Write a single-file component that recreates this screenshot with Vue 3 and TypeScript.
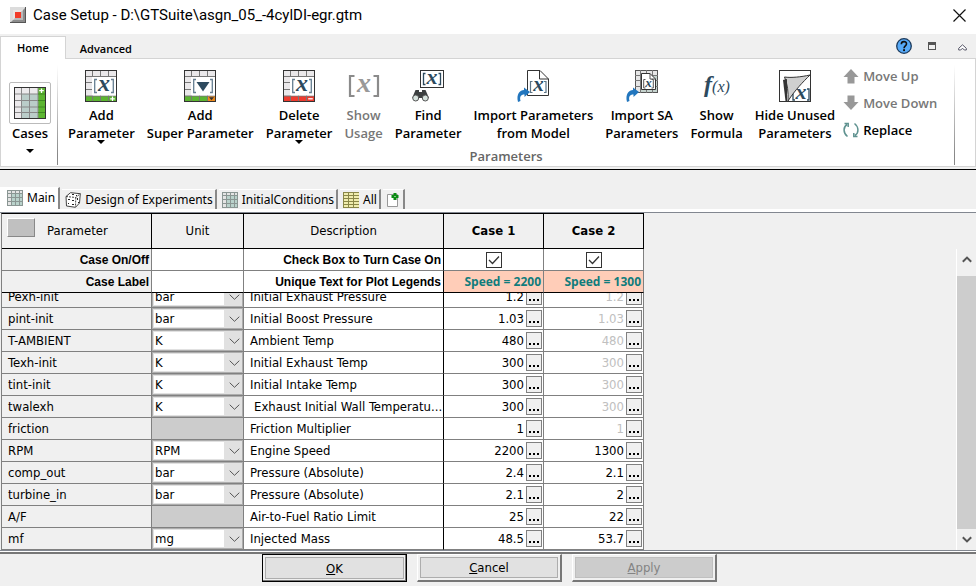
<script setup lang="ts">
import { ref } from 'vue'

type RibbonIcon =
  | 'add' | 'super' | 'delete' | 'usage' | 'find' | 'import' | 'sa' | 'formula' | 'hide'

interface RibbonItem {
  icon: RibbonIcon
  lines: [string, string]
  menu?: boolean
  disabled?: boolean
}

interface ParameterRow {
  name: string
  unit: string
  description: string
  values: [string, string]
  inherited?: boolean
  indent?: boolean
}

const ribbonItems: RibbonItem[] = [
  { icon: 'add', lines: ['Add', 'Parameter'], menu: true },
  { icon: 'super', lines: ['Add', 'Super Parameter'] },
  { icon: 'delete', lines: ['Delete', 'Parameter'], menu: true },
  { icon: 'usage', lines: ['Show', 'Usage'], disabled: true },
  { icon: 'find', lines: ['Find', 'Parameter'] },
  { icon: 'import', lines: ['Import Parameters', 'from Model'] },
  { icon: 'sa', lines: ['Import SA', 'Parameters'] },
  { icon: 'formula', lines: ['Show', 'Formula'] },
  { icon: 'hide', lines: ['Hide Unused', 'Parameters'] },
]

const folders = ['Main', 'Design of Experiments', 'InitialConditions', 'All']
const activeFolder = ref('Main')

const cases = ref([
  { title: 'Case 1', label: 'Speed = 2200', on: true },
  { title: 'Case 2', label: 'Speed = 1300', on: true },
])

const rows = ref<ParameterRow[]>([
  { name: 'Pexh-init', unit: 'bar', description: 'Initial Exhaust Pressure', values: ['1.2', '1.2'], inherited: true },
  { name: 'pint-init', unit: 'bar', description: 'Initial Boost Pressure', values: ['1.03', '1.03'], inherited: true },
  { name: 'T-AMBIENT', unit: 'K', description: 'Ambient Temp', values: ['480', '480'], inherited: true },
  { name: 'Texh-init', unit: 'K', description: 'Initial Exhaust Temp', values: ['300', '300'], inherited: true },
  { name: 'tint-init', unit: 'K', description: 'Initial Intake Temp', values: ['300', '300'], inherited: true },
  { name: 'twalexh', unit: 'K', description: 'Exhaust Initial Wall Temperatu...', values: ['300', '300'], inherited: true, indent: true },
  { name: 'friction', unit: '', description: 'Friction Multiplier', values: ['1', '1'], inherited: true },
  { name: 'RPM', unit: 'RPM', description: 'Engine Speed', values: ['2200', '1300'] },
  { name: 'comp_out', unit: 'bar', description: 'Pressure (Absolute)', values: ['2.4', '2.1'] },
  { name: 'turbine_in', unit: 'bar', description: 'Pressure (Absolute)', values: ['2.1', '2'] },
  { name: 'A/F', unit: '', description: 'Air-to-Fuel Ratio Limit', values: ['25', '22'] },
  { name: 'mf', unit: 'mg', description: 'Injected Mass', values: ['48.5', '53.7'] },
])
</script>

<template>
  <div class="window">
    <header class="titlebar">
      <svg class="app-icon" width="16" height="16" viewBox="0 0 16 16" aria-hidden="true">
        <rect width="16" height="16" fill="#8c8c8c" />
        <path d="M0 0H16L0 16Z" fill="#dcdcdc" />
        <path d="M0 15H15V0H16V16H0Z" fill="#555" />
        <rect x="3" y="3" width="10" height="10" fill="#b9b9b9" />
        <path d="M3 13V3H13Z" fill="#e9e4e3" />
        <rect x="5" y="5" width="6" height="6" fill="#f23b28" />
      </svg>
      <h1 class="title">Case Setup - D:\GTSuite\asgn_05_-4cylDI-egr.gtm</h1>
      <button class="icon-button" type="button" aria-label="Close">
        <svg width="13" height="13" viewBox="0 0 13 13"><path d="M.5 .5L12.5 12.5M12.5 .5L.5 12.5" stroke="#111" stroke-width="1.2" /></svg>
      </button>
    </header>

    <nav class="ribbon-tabs">
      <button class="ribbon-tab active" type="button">Home</button>
      <button class="ribbon-tab" type="button">Advanced</button>
      <div class="ribbon-tools">
        <button class="icon-button" type="button" aria-label="Help">
          <svg width="16" height="16" viewBox="0 0 16 16">
            <circle cx="8" cy="8" r="7.3" fill="#56a9f7" stroke="#1c3a5c" stroke-width="1.3" />
            <path d="M5.3 6.2C5.3 2.7 10.7 2.8 10.5 6C10.4 7.8 8 8 8 10.2" fill="none" stroke="#111" stroke-width="1.6" />
            <rect x="7.1" y="11.2" width="1.9" height="1.9" fill="#111" />
          </svg>
        </button>
        <button class="icon-button" type="button" aria-label="Restore">
          <svg width="8" height="8" viewBox="0 0 8 8"><path d="M0 0H8V8H0ZM1 3V7H7V3Z" fill="#555" fill-rule="evenodd" /></svg>
        </button>
        <button class="icon-button low" type="button" aria-label="Collapse">
          <svg width="9" height="8" viewBox="0 0 9 8"><path d="M.7 4.3L4.5 .8L8.3 4.3V6H6.3L4.5 4.2L2.7 6H.7Z" fill="#fff" stroke="#556" stroke-width="1" /></svg>
        </button>
      </div>
    </nav>

    <section class="ribbon">
      <button class="cases-button" type="button">
        <span class="cases-frame">
          <svg width="32" height="32" viewBox="0 0 32 32">
            <rect width="32" height="32" fill="#eceaec" />
            <rect x="7" y="7" width="17" height="25" fill="#bacdc9" />
            <rect x="24" width="8" height="32" fill="#5cb531" />
            <path d="M7.5 0V32M15.5 0V32M24 0V32M0 7H24M0 13.5H24M0 20H24M0 25.5H24" stroke="#888" />
            <path d="M24 7H32M24 13.5H32M24 20H32M24 25.5H32" stroke="#3f8a22" />
            <rect x=".5" y=".5" width="31" height="31" fill="none" stroke="#333" />
            <path d="M27.5 1.5V6M25.2 3.7H29.8" stroke="#fff" stroke-width="1.3" />
          </svg>
        </span>
        <span>Cases</span>
        <span class="caret"></span>
      </button>
      <div class="divider"></div>

      <div class="group">
        <div class="group-items">
          <button
            v-for="item in ribbonItems"
            :key="item.icon"
            class="ribbon-button"
            type="button"
            :disabled="item.disabled"
          >
            <svg class="ribbon-icon" width="32" height="32" viewBox="0 0 32 32" aria-hidden="true">
              <template v-if="item.icon === 'add' || item.icon === 'super' || item.icon === 'delete'">
                <rect width="32" height="32" fill="#eae8ea" />
                <rect y="26" width="32" height="6" :fill="item.icon === 'delete' ? '#ee3c30' : '#5cb531'" />
                <rect v-if="item.icon === 'super'" x="24" y="26" width="8" height="6" fill="#ee8a1c" />
                <path d="M7.5 0V32M15.5 0V32M23.5 0V32M0 6.5H32M0 12.5H7M0 19.5H7M0 26H32" stroke="#777" />
                <rect x="7" y="7" width="24" height="18.5" fill="#fff" />
                <rect x=".5" y=".5" width="31" height="31" fill="none" stroke="#333" />
                <path d="M12 9.5H9.7V22.5H12M26 9.5H28.3V22.5H26" fill="none" stroke="#657e91" stroke-width="1.3" />
                <path v-if="item.icon === 'super'" d="M12.5 12H25.5L19 21.5Z" fill="#2d4a5e" />
                <text v-else class="math" x="19" y="21" font-size="24">x</text>
                <path v-if="item.icon === 'add'" d="M27.5 26.5V31M25.2 28.8H29.8" stroke="#fff" stroke-width="1.2" />
                <path v-if="item.icon === 'delete'" d="M25.2 28.8H29.8" stroke="#fff" stroke-width="1.3" />
                <path v-if="item.icon === 'super'" d="M25 27.3H30L27.5 30.3Z" fill="#333" />
              </template>
              <template v-else-if="item.icon === 'usage'">
                <path d="M6.5 6H2V26H6.5M25.5 6H30V26H25.5" fill="none" stroke="#8b8b8b" stroke-width="2.2" />
                <text class="math muted" x="16" y="22" font-size="28">x</text>
              </template>
              <template v-else-if="item.icon === 'find'">
                <rect x="8.5" y=".5" width="23" height="17" fill="#fff" stroke="#333" />
                <path d="M13.5 3.5H11.5V14.5H13.5M26.5 3.5H28.5V14.5H26.5" fill="none" stroke="#2d4a5e" stroke-width="1.3" />
                <text class="math" x="20" y="14" font-size="22">x</text>
                <path d="M3.5 20H7V22H10V20H13.5L17 28H.2Z" fill="#3c3f40" />
                <circle cx="3.7" cy="28" r="3" fill="#d6e2dd" stroke="#555" />
                <circle cx="13.3" cy="28" r="3" fill="#d6e2dd" stroke="#555" />
              </template>
              <template v-else-if="item.icon === 'import'">
                <path d="M10.5 .5H23L31.5 9V25.5H10.5Z" fill="#fff" stroke="#333" />
                <path d="M22.5 .5V9H31.5" fill="none" stroke="#333" />
                <path d="M15.5 11.5H13.5V22.5H15.5M27 11.5H29V22.5H27" fill="none" stroke="#5c7486" stroke-width="1.2" />
                <text class="math" x="21.5" y="21" font-size="21">x</text>
                <path d="M1 32C-1 24 3 20 7 20V17.5L13 22L7.5 27V24.5C3.5 24.5 2.5 27 3.5 31Z" fill="#2276be" />
              </template>
              <template v-else-if="item.icon === 'sa'">
                <rect x="9.5" y=".5" width="22" height="22" fill="#c5d3ce" stroke="#555" />
                <path d="M10 1H31V5H15V22H10Z" fill="#e6e6e6" />
                <path d="M14.5 0V23M20.5 0V23M26.5 0V23M9 5.5H32M9 10.5H32M9 16.5H32" stroke="#777" />
                <path d="M15.5 3.5H24L29.5 9V19.5H15.5Z" fill="#fff" stroke="#333" />
                <path d="M24 3.5V9H29.5M19.500 9.500H17.700V18H19.500M25.500 9.500H27.300V18H25.500" fill="none" stroke="#555" />
                <text class="math" x="22.5" y="17" font-size="13">x</text>
                <path d="M1 32C-1 24 3 20 7 20V17.5L13 22L7.5 27V24.5C3.5 24.5 2.5 27 3.5 31Z" fill="#2276be" />
              </template>
              <template v-else-if="item.icon === 'formula'">
                <text class="math" x="7" y="22" font-size="24">f</text>
                <text class="math thin" x="20" y="22" font-size="16">(x)</text>
              </template>
              <template v-else>
                <rect x=".5" y=".5" width="31" height="31" fill="#fff" stroke="#333" />
                <path d="M16 20H14V30H16M28 19H30V30H28" fill="none" stroke="#2d4a5e" stroke-width="1.3" />
                <text class="math" x="22" y="29" font-size="22">x</text>
                <path d="M5.5 7C12 8 22 7 31 5C24 12 16 20 9 31C9.500 22 8.500 14 5.500 7Z" fill="#cfcfcf" stroke="#333" />
                <path d="M4 10L8 9V31H6.500Z" fill="#333" />
              </template>
            </svg>
            <span>{{ item.lines[0] }}</span>
            <span>{{ item.lines[1] }}</span>
            <span v-if="item.menu" class="caret"></span>
          </button>

          <div class="stack">
            <button class="stack-button" type="button" disabled>
              <svg width="16" height="16" viewBox="0 0 16 16"><path d="M8 1L15.500 9H11.500V15.500H4.500V9H.5Z" fill="#989898" /></svg>
              Move Up
            </button>
            <button class="stack-button" type="button" disabled>
              <svg width="16" height="16" viewBox="0 0 16 16"><path d="M8 15L15.500 7H11.500V.5H4.500V7H.5Z" fill="#989898" /></svg>
              Move Down
            </button>
            <button class="stack-button" type="button">
              <svg width="16" height="16" viewBox="0 0 16 16" fill="none" stroke="#5f9290" stroke-width="1.500">
                <path d="M4.500 14.500C0 11 0 5 4 2.500M1.500 1.500H5.200V5" />
                <path d="M11.500 1.500C16 5 16 11 12 13.500M14.500 14.500H10.800V11" />
              </svg>
              Replace
            </button>
          </div>
        </div>
        <div class="group-label">Parameters</div>
      </div>
      <div class="divider"></div>
    </section>

    <nav class="folders">
      <button
        v-for="folder in folders"
        :key="folder"
        class="folder"
        :class="{ active: folder === activeFolder }"
        type="button"
        @click="activeFolder = folder"
      >
        <svg v-if="folder === 'Design of Experiments'" width="16" height="16" viewBox="0 0 16 16" aria-hidden="true">
          <path d="M1 4.500L5.500 .7L15.300 1.700L14.500 11L10.500 15.300L1.500 14Z" fill="#fff" stroke="#444" />
          <path d="M1 4.500L10.800 5.500L15.300 1.700M10.800 5.500L10.500 15" fill="none" stroke="#444" stroke-dasharray="2 1" />
          <path d="M3 7H5V8H3ZM7 8H9V9H7ZM3 11H4V12H3ZM7 12H9V13H7ZM12 6H13V8H12ZM13 10H14V11H13ZM7 2H9V3H7ZM11 3H12V4H11Z" fill="#222" />
        </svg>
        <svg v-else-if="folder === 'All'" width="16" height="16" viewBox="0 0 16 16" aria-hidden="true">
          <rect width="16" height="16" fill="#f0edae" />
          <path d="M0 .5H16M0 3.500H16M0 6.500H16M0 9.500H16M0 12.500H16M0 15.500H16M.5 0V16M5.500 0V16M10.500 0V16" stroke="#8a8748" />
        </svg>
        <svg v-else width="16" height="16" viewBox="0 0 16 16" aria-hidden="true">
          <rect width="16" height="16" fill="#e4e4e4" />
          <rect x="4" y="4" width="12" height="12" fill="#b9d2cb" />
          <path d="M0 .5H16M0 3.500H16M0 7.500H16M0 11.500H16M0 15.500H16M.5 0V16M4.500 0V16M8.500 0V16M12.500 0V16M15.500 0V16" stroke="#8a9693" />
        </svg>
        {{ folder }}
      </button>
      <button class="folder add-folder" type="button" aria-label="New folder">
        <svg width="12" height="16" viewBox="0 0 12 16">
          <path d="M.5 2.500H10.500V14.500H.5Z" fill="#fff" stroke="#999" />
          <path d="M8 1V8M4.500 4.500H11.500" stroke="#0a8a12" stroke-width="3" />
          <rect x="7.500" y="4" width="1" height="1" fill="#fff" />
        </svg>
      </button>
    </nav>

    <main class="grid">
      <div class="grid-tables">
        <table class="sheet head">
          <colgroup><col class="c-name" /><col class="c-unit" /><col class="c-desc" /><col class="c-case" /><col class="c-case" /></colgroup>
          <thead>
            <tr class="titles">
              <th>
                <div class="name-title">
                  <button class="corner" type="button" aria-label="Select all"></button>
                  <span>Parameter</span>
                </div>
              </th>
              <th>Unit</th>
              <th class="edge">Description</th>
              <th v-for="item in cases" :key="item.title" class="case-title">{{ item.title }}</th>
            </tr>
            <tr>
              <td class="name caption">Case On/Off</td>
              <td></td>
              <td class="caption edge">Check Box to Turn Case On</td>
              <td v-for="item in cases" :key="item.title" class="value">
                <label class="check">
                  <input v-model="item.on" type="checkbox" :aria-label="item.title" />
                  <svg v-if="item.on" width="16" height="16" viewBox="0 0 16 16"><path d="M3 8L6.500 11.500L13 4.500" fill="none" stroke="#333" stroke-width="1.300" /></svg>
                </label>
              </td>
            </tr>
            <tr class="labels">
              <td class="name caption">Case Label</td>
              <td></td>
              <td class="caption edge">Unique Text for Plot Legends</td>
              <td v-for="item in cases" :key="item.title" class="case-label">{{ item.label }}</td>
            </tr>
          </thead>
        </table>

        <div class="viewport">
          <table class="sheet">
            <colgroup><col class="c-name" /><col class="c-unit" /><col class="c-desc" /><col class="c-case" /><col class="c-case" /></colgroup>
            <tbody>
              <tr v-for="row in rows" :key="row.name">
                <td class="name">{{ row.name }}</td>
                <td v-if="row.unit" class="unit">
                  <div class="select">
                    <select v-model="row.unit" :aria-label="row.name + ' unit'">
                      <option>{{ row.unit }}</option>
                    </select>
                    <svg width="11" height="6" viewBox="0 0 11 6" aria-hidden="true"><path d="M.7 .7L5.500 5.300L10.300 .7" fill="none" stroke="#555" /></svg>
                  </div>
                </td>
                <td v-else class="no-unit"></td>
                <td class="edge" :class="{ indent: row.indent }">{{ row.description }}</td>
                <td v-for="(value, i) in row.values" :key="i" class="value">
                  <div class="value-box" :class="{ inherited: row.inherited && i > 0 }">
                    <span>{{ value }}</span>
                    <button class="more" type="button" :aria-label="'Edit ' + row.name">
                      <svg width="12" height="2" viewBox="0 0 12 2"><path d="M1 0H3V2H1ZM5 0H7V2H5ZM9 0H11V2H9Z" fill="#000" /></svg>
                    </button>
                  </div>
                </td>
              </tr>
            </tbody>
          </table>
        </div>
      </div>

      <div class="scrollbar" aria-hidden="true">
        <svg width="10" height="7" viewBox="0 0 10 7"><path d="M.8 5.800L5 1.600L9.200 5.800" fill="none" stroke="#555" stroke-width="2" /></svg>
        <div class="thumb"></div>
        <svg width="10" height="7" viewBox="0 0 10 7"><path d="M.8 1.200L5 5.400L9.200 1.200" fill="none" stroke="#555" stroke-width="2" /></svg>
      </div>
    </main>

    <footer class="actions">
      <button class="action default" type="button"><span><u>O</u>K</span></button>
      <button class="action" type="button"><span><u>C</u>ancel</span></button>
      <button class="action" type="button" disabled><span><u>A</u>pply</span></button>
    </footer>
  </div>
</template>

<style>
body {
  margin: 0;
}
</style>

<style scoped>
* {
  box-sizing: border-box;
}
button {
  margin: 0;
  padding: 0;
  border: 0;
  background: none;
  color: inherit;
  font: inherit;
}
svg {
  display: block;
  flex: none;
  overflow: visible;
}
.window {
  display: flex;
  flex-direction: column;
  height: 100vh;
  overflow: hidden;
  background: #f0f0f0;
  color: #000;
  font-family: "DejaVu Sans Condensed", "DejaVu Sans", sans-serif;
  font-size: 13px;
}
.titlebar {
  display: flex;
  flex: none;
  align-items: center;
  gap: 7px;
  height: 34px;
  padding: 0 10px 4px;
  background: #fff;
}
.title {
  flex: 1;
  margin: 0;
  font: 400 15px Roboto, sans-serif;
}
.ribbon-tabs {
  display: flex;
  flex: none;
  height: 25px;
  padding-top: 2px;
  border-bottom: 1px solid #d4d4d4;
  font: 600 11px "Open Sans", sans-serif;
}
.ribbon-tab {
  padding: 2px 14px 0;
}
.ribbon-tab.active {
  height: 23px;
  padding: 0 16px 2px;
  border: 1px solid #d4d4d4;
  border-bottom: 0;
  background: #fff;
  box-shadow: 0 1px #fff;
}
.ribbon-tools {
  display: flex;
  align-items: center;
  gap: 16px;
  margin-left: auto;
  padding: 0 9px 3px 0;
}
.low {
  padding: 4px 0 0 6px;
}
.ribbon {
  display: flex;
  flex: none;
  height: 108px;
  border: 1px solid #d4d4d4;
  border-top: 0;
  background: #fff;
  font: 600 13px/18px "Open Sans", sans-serif;
}
.cases-button {
  display: flex;
  flex-direction: column;
  align-items: center;
  width: 56px;
  padding: 23px 0 0 2px;
}
.cases-frame {
  padding: 4px;
  border: 1px solid #bbb;
  border-radius: 2px;
}
.caret {
  border: 4px solid transparent;
  border-top-color: #000;
  border-bottom: 0;
}
.cases-button .caret {
  margin-top: 7px;
}
.divider {
  width: 1px;
  margin: 6px 0 1px;
  background: linear-gradient(#fff, #888 90%);
}
.group {
  flex: none;
}
.group-items {
  display: flex;
  gap: 12px;
  height: 88px;
  padding: 11px 17px 0 10px;
}
.ribbon-button {
  display: flex;
  flex-direction: column;
  align-items: center;
  justify-content: flex-start;
  white-space: nowrap;
}
.ribbon-icon {
  margin-bottom: 4px;
}
.ribbon-button .caret {
  margin-top: -2px;
}
button:disabled {
  color: #777;
}
.math {
  fill: #2d4a5e;
  font-family: "Liberation Serif", serif;
  font-style: italic;
  font-weight: 700;
  text-anchor: middle;
}
.math.muted {
  fill: #999;
}
.math.thin {
  font-weight: 400;
}
.stack {
  display: flex;
  flex-direction: column;
  gap: 9px;
  margin: -3px 0 0 -4px;
}
.stack-button {
  display: flex;
  align-items: center;
  gap: 4px;
  white-space: nowrap;
}
.group-label {
  color: #666;
  text-align: center;
}
.folders {
  display: flex;
  flex: none;
  align-items: flex-end;
  gap: 2px;
  height: 43px;
  margin-top: 2px;
  padding-bottom: 3px;
  border-top: 1px solid #000;
  background: linear-gradient(#fff, #fff) bottom / 100% 3px no-repeat;
  font: 12px "Noto Sans", sans-serif;
}
.folder {
  display: flex;
  align-items: center;
  gap: 4px;
  height: 20px;
  padding: 0 2px 0 3px;
  border-top: 1px solid #fff;
  border-right: 2px solid #888;
  white-space: nowrap;
}
.folder.active {
  height: 22px;
  padding: 0 3px 2px 7px;
  background: #fff;
}
.folder.add-folder {
  padding: 0 4px;
}
.grid {
  display: flex;
  flex: 1;
  min-height: 0;
  border-top: 1px solid #828790;
  border-bottom: 1px solid #828790;
}
.grid-tables {
  display: flex;
  flex: 1;
  flex-direction: column;
  min-width: 0;
  padding-left: 1px;
}
.viewport {
  display: flex;
  flex: 1;
  flex-direction: column;
  justify-content: flex-end;
  min-height: 0;
  overflow: hidden;
}
.sheet {
  flex: none;
  width: 643px;
  border-collapse: separate;
  border-spacing: 0;
  border-left: 1px solid #808080;
  table-layout: fixed;
}
.head {
  border-top: 1px solid #000;
}
.c-name {
  width: 150px;
}
.c-unit {
  width: 92px;
}
.c-desc {
  width: 200px;
}
.c-case {
  width: 100px;
}
.sheet td,
.sheet th {
  height: 22px;
  padding: 0 2px 0 6px;
  border-right: 1px solid #808080;
  border-bottom: 1px solid #808080;
  background: #fff;
  line-height: 16px;
  white-space: nowrap;
  overflow: hidden;
}
.sheet .edge {
  border-right-color: #000;
}
.sheet .name {
  background: #f0f0f0;
}
.sheet .titles th {
  height: 35px;
  padding: 0;
  border-color: #000;
  background: #f0f0f0;
  font-weight: 400;
}
.sheet .titles .case-title {
  font-weight: 700;
}
.name-title {
  display: flex;
  align-items: center;
  gap: 12px;
  padding-left: 5px;
}
.corner {
  width: 28px;
  height: 19px;
  margin-bottom: 8px;
  border: 1px solid #fff;
  border-right-color: #888;
  border-bottom-color: #888;
  background: #c0c0c0;
}
.sheet .caption {
  font: 700 12px "Liberation Sans", sans-serif;
  text-align: right;
}
.sheet .labels td {
  border-bottom-color: #000;
}
.sheet .case-label {
  background: #ffcdb8;
  color: #107c7c;
  font: 700 12px "Open Sans", sans-serif;
  text-align: right;
}
.check {
  display: grid;
  width: 16px;
  margin: 0 auto;
}
.check input,
.check svg {
  grid-area: 1 / 1;
}
.check input {
  width: 16px;
  height: 16px;
  margin: 0;
  border: 1px solid #333;
  background: #fff;
  appearance: none;
}
.check svg {
  pointer-events: none;
}
.sheet .unit {
  padding: 0;
}
.select {
  display: grid;
  align-items: center;
}
.select select,
.select svg {
  grid-area: 1 / 1;
}
.select select {
  width: 100%;
  height: 21px;
  padding: 0 0 0 2px;
  border: 1px solid #adadad;
  border-radius: 0;
  outline: 1px solid #e1e1e1;
  outline-offset: -2px;
  background: linear-gradient(90deg, #fff calc(100% - 18px), #e1e1e1 0);
  color: #000;
  font: inherit;
  appearance: none;
}
.select svg {
  justify-self: end;
  margin-right: 3px;
  pointer-events: none;
}
.sheet .no-unit {
  background: #ccc;
}
.sheet .indent {
  padding-left: 10px;
}
.sheet .value {
  padding: 0 1px;
}
.value-box {
  display: flex;
  align-items: center;
  justify-content: flex-end;
  gap: 2px;
}
.inherited {
  color: #c0c0c0;
}
.more {
  display: flex;
  align-items: flex-end;
  justify-content: center;
  width: 16px;
  height: 17px;
  padding-bottom: 3px;
  border: 1px solid #808080;
  background: #f0f0f0;
}
.scrollbar {
  display: flex;
  flex-direction: column;
  align-items: center;
  width: 20px;
  margin-top: 36px;
  padding: 7px 0;
  gap: 13px;
  border-left: 1px solid #fff;
}
.scrollbar svg:last-child {
  margin-top: -6px;
}
.thumb {
  flex: 1;
  width: 100%;
  background: #cdcdcd;
}
.actions {
  display: flex;
  flex: none;
  justify-content: center;
  gap: 10px;
  height: 35px;
  padding: 0 0 4px 3px;
  border-top: 1px solid #fff;
  box-shadow: inset 0 2px #777;
}
.action {
  width: 145px;
  margin-top: 2px;
  padding: 2px;
  border: 1px solid #fff;
  border-right: 2px solid #777;
  border-bottom: 2px solid #777;
  background: #f0f0f0;
}
.action.default {
  border: 1px solid #000;
  box-shadow: inset -1px -1px #777;
}
.action span {
  display: flex;
  align-items: center;
  justify-content: center;
  height: 100%;
  border: 1px solid #adadad;
  background: #e1e1e1;
}
.action:disabled {
  color: #838383;
}
.action:disabled span {
  border-color: #bfbfbf;
  background: #ccc;
}
</style>
